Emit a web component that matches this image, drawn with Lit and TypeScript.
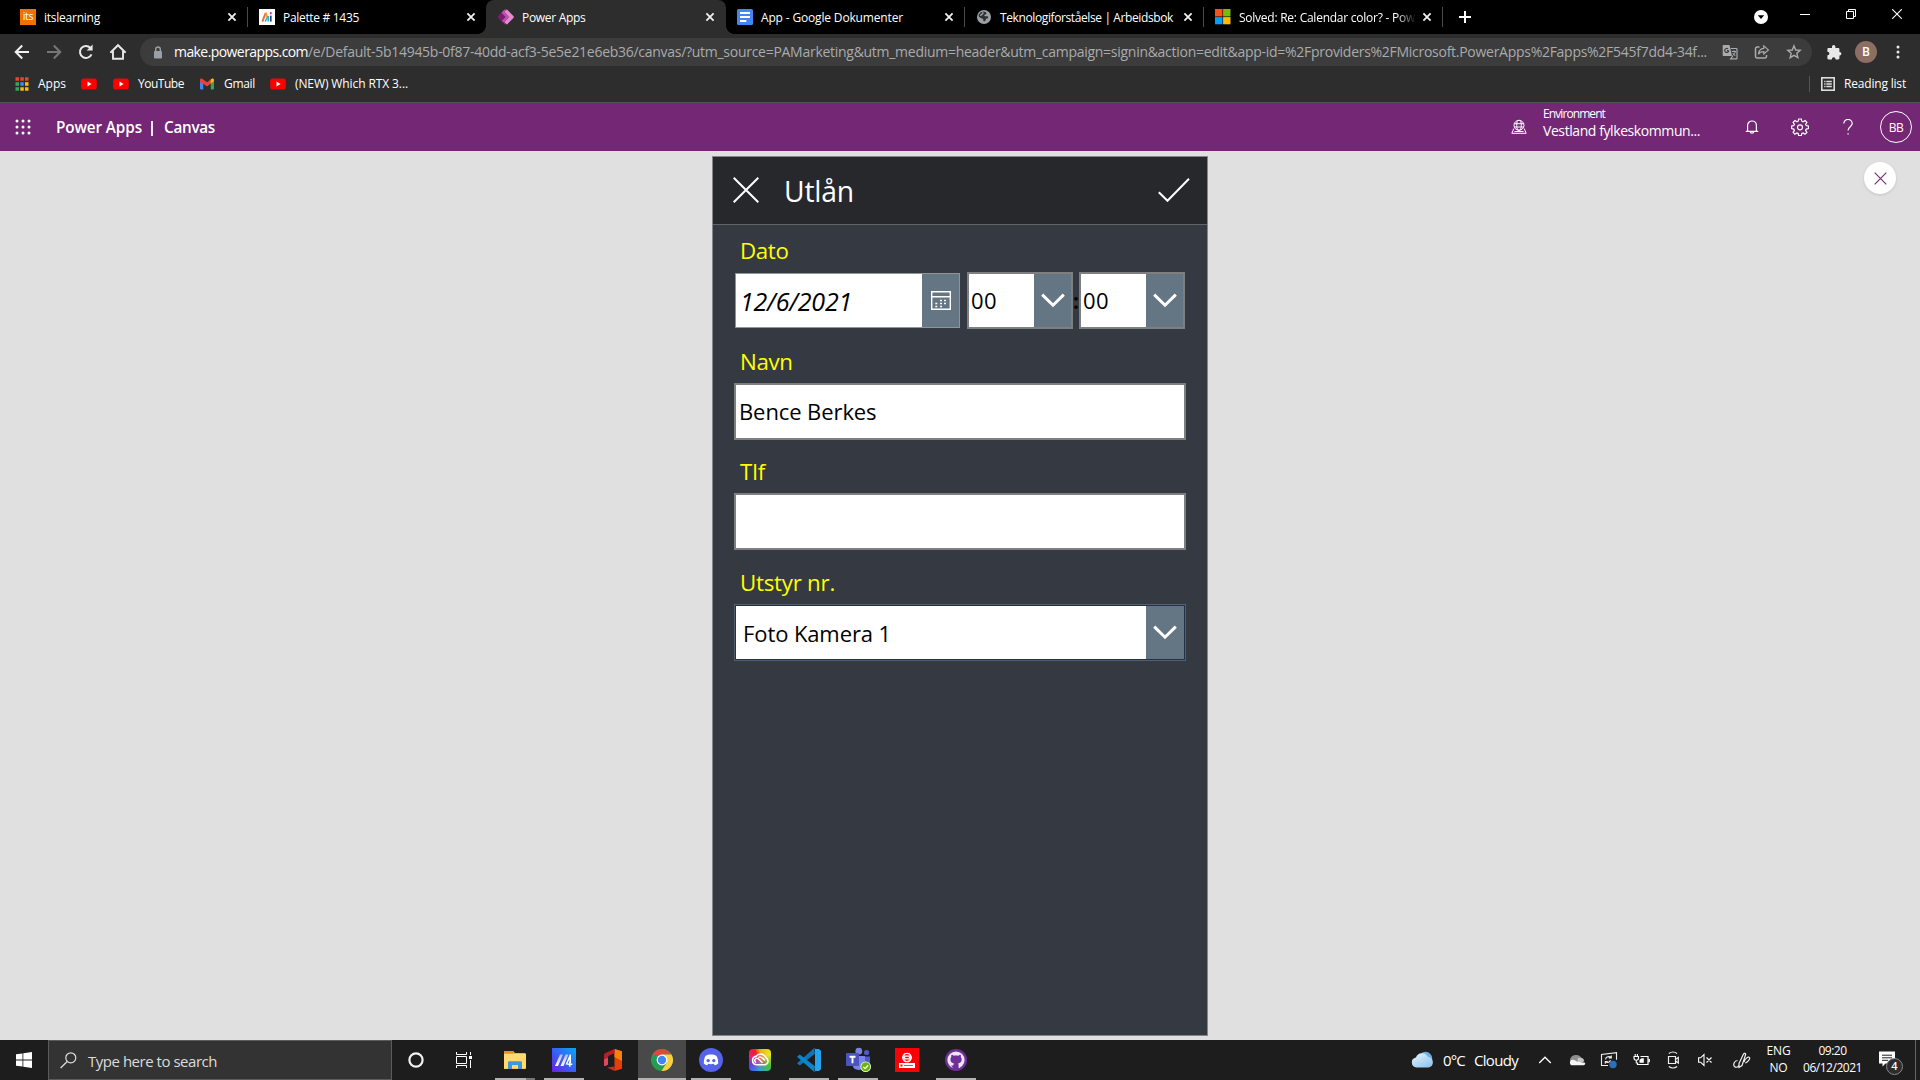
import { LitElement, html, svg, css, TemplateResult } from "lit";
import { customElement, property } from "lit/decorators.js";

type Svg = TemplateResult;

const icon = (w: number, h: number, body: Svg, box = `0 0 ${w} ${h}`) =>
  html`<svg width=${w} height=${h} viewBox=${box} fill="none">${body}</svg>`;

/* A single line of text whose tracking is spread over a given width. */
@customElement("fit-text")
class FitText extends LitElement {
  @property({ type: Number }) w = 0;
  @property() text = "";
  static styles = css`
    :host { display: block; flex: none; white-space: pre; }
  `;
  render() {
    return html`<span>${this.text}</span>`;
  }
  updated() {
    const span = this.renderRoot.querySelector("span")!;
    span.style.letterSpacing = "0";
    const natural = span.getBoundingClientRect().width;
    if (this.w && natural) {
      span.style.letterSpacing = `${(this.w - natural) / this.text.length}px`;
      this.style.width = `${this.w}px`;
    }
  }
}

const t = (text: string, w: number, cls = "") =>
  html`<fit-text class=${cls} .text=${text} .w=${w}></fit-text>`;

/* ---------- icons ---------- */
const tabClose = icon(16, 16, svg`<path d="M4.4 4.4l7.2 7.2M11.6 4.4l-7.2 7.2" stroke="#f1f1f1" stroke-width="1.8"/>`);
const favIts = html`<span class="its">its</span>`;
const favPalette = icon(16, 16, svg`<rect width="16" height="16" fill="#fff"/>
  <path d="M3.4 12.6L6.6 4" stroke="#f0642f" stroke-width="1.8"/><path d="M6.8 3.6L8.4 9" stroke="#f59a23" stroke-width="1.7"/>
  <path d="M6.2 12.6l2-4" stroke="#39b7d8" stroke-width="1.7"/><path d="M9.2 7v5.6" stroke="#2bb5a0" stroke-width="1.5"/>
  <path d="M11.8 6.6v6" stroke="#2a3c9b" stroke-width="1.7"/><path d="M11.8 3.2v2" stroke="#d6218c" stroke-width="1.8"/>`);
const favPower = icon(16, 16, svg`<path d="M6.3.8h3.2l-2 7.2 2 7.2H6.8L.6 9a1.4 1.4 0 010-2z" fill="#9a2b8e"/>
  <path d="M9 .4l6.4 6.7a1.3 1.3 0 010 1.8L9 15.6 6.4 13l4.4-5-4.4-5z" fill="#e58ad0"/>
  <path d="M6.3.8L9 .4l-2.6 2.7 4.4 4.9-4.4 5L3.6 12 7.5 8 3.4 3.8z" fill="#c050ae"/>
  <path d="M3.4 3.8L7.5 8l-3.9 4L.6 9a1.4 1.4 0 010-2z" fill="#7a1c72"/>`);
const favDocs = icon(16, 16, svg`<rect width="16" height="16" rx="1.5" fill="#4285f4"/>
  <path d="M3 4h10M3 8h10M3 12h6.3" stroke="#fff" stroke-width="1.8"/>`);
const favGlobe = icon(16, 16, svg`<circle cx="8" cy="8" r="7" fill="#9aa0a6"/>
  <path d="M7.4 2.4c2 .2 3.4 1.2 3 2.4-.4 1-2 .6-2.2 1.8-.1 1 1.800.6 3 .7 1 .1 1.300.9.7 1.700-.6.8-1.400.3-1.900 1-.4.8-.2 1.500-1.200 2.200-.9.5-1.600-.2-1.500-1.200 0-.9-.4-1.200-1.300-1.600C4.500 8.800 3 8.300 2.500 6.500 3 4.500 5 2.500 7.400 2.400z" fill="#1c1c1c" opacity=".85"/>
  <path d="M6.300 3.500c1.200.2.6 1.100-.2 1.600-.9.500-.8 1.300-2 1.300" stroke="#9aa0a6" stroke-width="1.300"/>`);
const favMs = icon(16, 16, svg`<path d="M0 0h7.500v7.500H0z" fill="#f65314"/><path d="M8.100 0h7.400v7.500H8.100z" fill="#7cbb00"/>
  <path d="M0 8.100h7.500v7.200H0z" fill="#00a1f1"/><path d="M8.100 8.100h7.400v7.200H8.100z" fill="#ffbb00"/>`);
const youtube = icon(16, 12, svg`<rect x=".2" y=".4" width="15.600" height="11.200" rx="2.600" fill="#f00"/><path d="M6.500 3.600L10.600 6 6.500 8.400z" fill="#fff"/>`);
const gmail = icon(16, 12, svg`<path d="M1 11.500V2.800l3.300 2.400v6.300H1.800a.8.8 0 01-.8-.8z" fill="#4285f4"/>
  <path d="M11.700 5.200L15 2.800v7.900a.8.800 0 01-.8.8h-2.500z" fill="#34a853"/>
  <path d="M1 4V2C1 .6 2.500.1 3.500.9L8 4.200 12.500.9v4L8 8.400 4.300 5.700V6z" fill="#ea4335"/>
  <path d="M11.700 5.600V1.500l.8-.6c1-.8 2.500-.3 2.500 1.100v1.200z" fill="#fbbc04"/>`);
const appsGrid = icon(14, 14, svg`
  <path d="M.5.300h3.500v3.500H.5zM5.300.300h3.500v3.500H5.300zM10 .300h3.500v3.500H10z" fill="#ea4335"/>
  <path d="M.5 5.200h3.500v3.600H.5z" fill="#34a853"/><path d="M5.300 5.200h3.500v3.600H5.300z" fill="#4285f4"/><path d="M10 5.200h3.500v3.600H10z" fill="#fbbc04"/>
  <path d="M.5 10.200h3.500v3.500H.5z" fill="#34a853"/><path d="M5.300 10.200h3.500v3.500H5.300zM10 10.200h3.500v3.500H10z" fill="#fbbc04"/>`);
const back = (c: string, flip = false) => icon(16, 16, svg`<path d=${flip ? "M1 8h13M7.800 1.500L14.300 8l-6.500 6.500" : "M15 8H2M8.200 1.500L1.700 8l6.500 6.500"} stroke=${c} stroke-width="2"/>`);
const reload = icon(16, 16, svg`<path d="M13.500 10.300A6 6 0 1112.300 3.800" stroke="#e8e8e8" stroke-width="2"/><path d="M14.600.6v6H8.600z" fill="#e8e8e8"/>`);
const home = icon(18, 18, svg`<path d="M4 8.500v7.300h10V8.500M1.400 9.700L9 2.200l7.600 7.500M4 9v-1h0M14 9V8" stroke="#e8e8e8" stroke-width="1.900"/>`);
const lock = icon(10, 13, svg`<rect x="1" y="5" width="8" height="7.500" rx="1" fill="#9aa0a6"/><path d="M2.700 5.500V3.300a2.300 2.300 0 014.600 0v2.200" stroke="#9aa0a6" stroke-width="1.400"/>`);
const translate = icon(16, 16, svg`<path d="M1.500 1h6l2.500 11H1.500a.8.800 0 01-.8-.8V1.800c0-.4.300-.8.800-.8z" fill="#a9abad"/>
  <path d="M8.700 4.500h5.600c.4 0 .7.300.7.700v9c0 .4-.3.700-.7.700H8.600L10.800 12" stroke="#a9abad" stroke-width="1.200"/>
  <path d="M6.800 6.700H5m1.700.1A2 2 0 116 4.900" stroke="#3c3c3c" stroke-width="1.200"/><path d="M9.800 7.500h4.400M12 6.500v1M10.500 11.500c1.500-.7 2.500-2.200 2.800-4M10.700 9l2.600 3" stroke="#a9abad" stroke-width="1"/>`);
const share = icon(16, 16, svg`<path d="M5.500 3H3a1.500 1.500 0 00-1.500 1.500v8A1.500 1.500 0 003 14h8a1.500 1.500 0 001.500-1.500V11" stroke="#a9abad" stroke-width="1.500"/>
  <path d="M9.800 1.900l4.600 4-4.600 4V7.600c-2.800 0-4.300.8-5.400 2.600.3-3.600 2.300-5.600 5.400-5.900z" stroke="#a9abad" stroke-width="1.200"/>`);
const star = icon(16, 16, svg`<path d="M8 1.900l1.750 4.100 4.450.4-3.370 2.930 1 4.350L8 11.400l-3.830 2.300 1-4.360L1.800 6.400l4.450-.4z" stroke="#a9abad" stroke-width="1.400"/>`);
const puzzle = icon(16, 16, svg`<path d="M6 2.700a1.700 1.700 0 013.400 0V4h2.800c.7 0 1.200.5 1.200 1.200V8h.300a1.700 1.700 0 010 3.400h-.3v2.800c0 .7-.5 1.200-1.200 1.200H9.500V15a1.800 1.800 0 00-3.600 0v.4H2.600c-.7 0-1.200-.5-1.200-1.200v-3h.3a1.700 1.700 0 000-3.400h-.3V5.200C1.400 4.500 1.900 4 2.600 4H6z" fill="#e8e8e8"/>`);
const dots = icon(4, 14, svg`<circle cx="2" cy="2" r="1.500" fill="#e8e8e8"/><circle cx="2" cy="7" r="1.500" fill="#e8e8e8"/><circle cx="2" cy="12" r="1.500" fill="#e8e8e8"/>`);
const reading = icon(14, 14, svg`<rect x=".8" y=".8" width="12.400" height="12.400" stroke="#ddd" stroke-width="1.600"/>
  <path d="M3.200 4.500h1.300M3.200 7h1.300M3.200 9.500h1.300M5.300 4.500h5.500M5.300 7h5.500M5.300 9.500h5.500" stroke="#ddd" stroke-width="1.500"/>`);
const plus = icon(12, 12, svg`<path d="M6 0v12M0 6h12" stroke="#fff" stroke-width="2"/>`);
const tabSearch = icon(14, 14, svg`<circle cx="7" cy="7" r="7" fill="#fff"/><path d="M3.800 5.200h6.400L7 9z" fill="#000"/>`);
const winMin = icon(10, 10, svg`<path d="M0 5.500h10" stroke="#fff"/>`);
const winRestore = icon(10, 10, svg`<path d="M.5 2.500h7v7h-7zM2.500 2.500v-2h7v7h-2" stroke="#fff"/>`);
const winClose = icon(10, 10, svg`<path d="M.2.200l9.600 9.600M9.800.200L.2 9.800" stroke="#fff" stroke-width="1.100"/>`);

const waffle = icon(16, 16, svg`${[2, 8, 14].map(y => [2, 8, 14].map(x => svg`<circle cx=${x} cy=${y} r="1.500" fill="#fff"/>`))}`);
const envIcon = icon(16, 16, svg`<circle cx="8" cy="6.300" r="5" stroke="#fff"/><ellipse cx="8" cy="6.300" rx="2.300" ry="5" stroke="#fff"/>
  <path d="M3.300 4.700h9.400M3.300 8h9.400M2.800 9.500L.8 14.300h14.400l-2-4.800M3.400 12.500h9.200" stroke="#fff"/>`);
const bell = icon(14, 16, svg`<path d="M2.600 12V6.400a4.400 4.400 0 018.800 0V12M.8 12.300h12.400M5.300 12.500a1.700 1.700 0 003.400 0" stroke="#fff" stroke-width="1.200"/>`);
const gear = icon(18, 18, svg`<path d="M7.700 1h2.600l.5 2.200 1.300.6 2-1.300 1.800 1.900-1.300 1.900.6 1.300 2.300.5v2.500l-2.300.5-.6 1.300 1.300 2-1.900 1.800-1.900-1.300-1.300.6-.5 2.200H7.700l-.5-2.200-1.300-.6-2 1.300-1.800-1.900 1.300-1.900-.6-1.300L.6 10.600V8.100l2.200-.5.600-1.300-1.300-2L4 2.500l1.900 1.300 1.300-.6z" stroke="#fff" stroke-width="1.200"/><circle cx="9" cy="9.300" r="2.500" stroke="#fff" stroke-width="1.200"/>`);
const help = icon(10, 16, svg`<path d="M.8 4.600a4.200 4.200 0 118.400 0c0 3.100-4.200 3.300-4.200 7" stroke="#fff" stroke-width="1.200"/><path d="M4.400 14.200h1.300v1.400H4.400z" fill="#fff"/>`);
const cross = (n: number, c: string, sw: number) => icon(n, n, svg`<path d=${`M.7.700L${n - 0.7} ${n - 0.7}M${n - 0.7}.700L.7 ${n - 0.7}`} stroke=${c} stroke-width=${sw}/>`);
const check = icon(32, 24, svg`<path d="M.8 14.200l8.700 8.600L31 .8" stroke="#fff" stroke-width="2"/>`);
const calendar = icon(20, 19, svg`<path d="M.7.700h18.600v17.600H.7zM.7 5.800h18.600" stroke="#fff" stroke-width="1.400"/>
  <path d="M9 9.500h2M13 9.500h2M4.300 12.500h2M9 12.500h2M13 12.500h2M4.300 15.500h2M9 15.500h2" stroke="#fff" stroke-width="1.700"/>`);
const chevron = icon(24, 15, svg`<path d="M1.200 1.600L12 12.200 22.800 1.600" stroke="#fff" stroke-width="3"/>`);

const winLogo = icon(16, 16, svg`<path d="M0 2.300l6.500-.9v6.200H0zM7.300 1.300L16 0v7.600H7.300zM0 8.400h6.500v6.200L0 13.700zM7.300 8.400H16V16l-8.700-1.300z" fill="#fff"/>`);
const magnifier = icon(17, 17, svg`<circle cx="10.800" cy="5.800" r="5" stroke="#ddd" stroke-width="1.200"/><path d="M7.200 9.500L.6 16" stroke="#ddd" stroke-width="1.300"/>`);
const cortana = icon(16, 16, svg`<circle cx="8" cy="8" r="6.600" stroke="#f2f2f2" stroke-width="2.200"/>`);
const taskView = icon(16, 16, svg`<path d="M.5 0v2.500h10V0M.5 16v-2.500h10V16M.5 4.500h10v7H.5zM14.500 0v3M14.500 8v8" stroke="#fff"/><path d="M13 4h3v3h-3z" fill="#fff"/>`);
const explorer = icon(24, 24, svg`<path d="M1 3h9l2 2h10.500v16H1z" fill="#f0b93a"/><path d="M1 3h9.500v2.500H1z" fill="#d99a1a"/><path d="M1 6h22v14.500H1z" fill="#ffda70"/>
  <path d="M5 21v-6.300c0-1 .6-1.500 1.500-1.500h11c1 0 1.500.5 1.500 1.500V21h-4v-4H9v4z" fill="#3f97d9"/>`);
const maIcon = icon(24, 24, svg`<defs><linearGradient id="ma" x1="0" y1="1" x2="1" y2="0"><stop offset="0" stop-color="#6a1fe8"/><stop offset=".5" stop-color="#3563f2"/><stop offset="1" stop-color="#08a9f5"/></linearGradient>
  <linearGradient id="mb" x1="0" y1="1" x2="0" y2="0"><stop offset="0" stop-color="#fff"/><stop offset="1" stop-color="#b9b4fa"/></linearGradient></defs>
  <rect width="24" height="24" fill="url(#ma)"/><path d="M3 18L8 6.500h3L6 18zM8.500 18l5-11.500h3L11.500 18z" fill="url(#mb)"/>
  <path d="M13.500 16.500l4.300-10H19v8.500h-1.600v-3.800L15.200 16.500z" fill="#fff"/><path d="M17.800 13.800v5M15.300 16.300h5" stroke="#fff" stroke-width="1.500"/>`);
const office = icon(24, 24, svg`<path d="M13.500 1L21 3.200V20.700L13.500 23z" fill="#df4206"/><path d="M13.500 1L21 3.200V13l-7.500-4z" fill="#f6820d"/>
  <path d="M3 7.200c0-1 .5-1.700 1.400-2.200L13.500 1v4.300L8.200 7.500c-.8.4-1.200.9-1.200 1.800v7.200L4.500 18c-.9.300-1.500 0-1.500-1z" fill="#b3202a"/>
  <path d="M3 11.500L7 9.800v6.700L4.500 18c-.9.300-1.500 0-1.500-1z" fill="#dd4a60"/><path d="M6 19.500l7.500-1V23z" fill="#d3262c"/>`);
const chrome = icon(24, 24, svg`<circle cx="12" cy="12" r="11" fill="#249c52"/><path d="M12 1a11 11 0 019.500 5.500H12L8 9 2.500 6.500A11 11 0 0112 1z" fill="#e0483c"/>
  <path d="M2.500 6.500L7.200 14.800 10 8z" fill="#249c52"/><path d="M12 6.500h9.500A11 11 0 0111.500 23l5.200-8.300z" fill="#fccf43"/>
  <circle cx="12" cy="12" r="5.400" fill="#fff"/><circle cx="12" cy="12" r="4.200" fill="#4285f4"/>`);
const discord = icon(24, 24, svg`<circle cx="12" cy="12" r="12" fill="#5562ea"/><path d="M8.800 6.800c2-.5 4.400-.5 6.400 0 1.500.4 2.600 1.300 3.100 2.600.7 2 1 4.200.9 6.200-1.100 1-2.300 1.500-3.500 1.700l-.9-1.500c-1.900.5-3.700.5-5.600 0l-.9 1.500c-1.200-.2-2.400-.7-3.500-1.700-.1-2 .2-4.200.9-6.200.5-1.300 1.600-2.200 3.100-2.600z" fill="#fff"/><circle cx="9.200" cy="12.600" r="1.700" fill="#5562ea"/><circle cx="14.800" cy="12.600" r="1.700" fill="#5562ea"/>`);
const creative = html`<span class="cc">${icon(22, 22, svg`<path d="M7.500 15.800a4.300 4.300 0 01-.4-8.500A5.700 5.700 0 0117 8.800a3.800 3.800 0 01-1 7z" stroke="#fff" stroke-width="1.600"/><path d="M13.500 13.800L9.800 10.300a2.200 2.200 0 10-2.600 3.300M9.500 8.500c1.600-1.500 3-.3 4.500 1.100l2 1.900" stroke="#fff" stroke-width="1.500"/>`)}</span>`;
const vscode = icon(24, 24, svg`<path d="M18 5.800L2.800 17.600 0 15.200 17 .2z" fill="#0f75b8"/><path d="M18 18.200L2.800 6.400 0 8.800l17 15z" fill="#0b86cb"/><path d="M17 .2L24 3v18l-7 2.800 1-1.500V1.700z" fill="#27a3ee"/><path d="M18 1h4l2 2v18l-2 2h-4z" fill="#27a3ee"/>`);
const teams = icon(26, 26, svg`<circle cx="13.800" cy="4.200" r="3.400" fill="#7b83eb"/><circle cx="21.600" cy="5.500" r="2.600" fill="#5059c9"/><path d="M18 9.500h7v7.500a4 4 0 01-7 2.500z" fill="#5059c9"/><path d="M8 9h12v8a6.500 6.500 0 01-12 3z" fill="#7b83eb"/>
  <rect x="1" y="6" width="13" height="13" rx="1" fill="#4b53bc"/><path d="M4.500 9.800h6M7.500 9.800v6.500" stroke="#fff" stroke-width="1.900"/>
  <circle cx="20.700" cy="19.800" r="5.300" fill="#fff"/><circle cx="20.700" cy="19.800" r="4.500" fill="#6bb700"/><path d="M18.400 19.900l1.700 1.700 3-3.300" stroke="#fff" stroke-width="1.300"/>`);
const redApp = icon(24, 24, svg`<rect width="24" height="24" fill="#fb0007"/><path d="M8 8.200a4.200 4.200 0 018 0zM8 10.800a4.200 4.200 0 008 0z" stroke="#fff" stroke-width="1.300"/><path d="M7 9.500h3.200M13.800 9.500H17" stroke="#fff" stroke-width="2"/>
  <rect x="4" y="15" width="16" height="5" fill="#fff"/><rect x="5.500" y="16.500" width="2" height="2" fill="#fb0007"/><path d="M9 17.500h9" stroke="#777" stroke-width="1"/>`);
const github = icon(24, 24, svg`<circle cx="12" cy="12" r="11" fill="#6e2f98"/><circle cx="12" cy="12" r="8.600" fill="#efe6f4"/>
  <path d="M9.400 21v-3.500c-1.500.3-2.300-.4-2.800-1.300M14.600 21v-3.900c0-.8-.2-1.200-.5-1.600 2-.3 3.600-1.200 3.600-4.200 0-1-.4-1.800-.9-2.400.1-.5.200-1.300-.2-2.200-.8 0-1.700.5-2.300 1-1.500-.4-3-.4-4.500 0-.6-.5-1.500-1-2.300-1-.4.900-.3 1.700-.2 2.200-.6.600-.9 1.400-.9 2.400 0 3 1.600 3.900 3.600 4.200-.4.400-.5.800-.6 1.500v4.300z" fill="#6e2f98"/>`);

const weather = icon(24, 18, svg`<defs><linearGradient id="cl" x1="0" y1="0" x2=".8" y2="1"><stop offset="0" stop-color="#e8f6ff"/><stop offset="1" stop-color="#8fc4ee"/></linearGradient></defs>
  <circle cx="15.500" cy="7.500" r="6.700" fill="#6eaee2"/><path d="M6.500 16.500a5 5 0 01-.6-9.900A6.500 6.500 0 0118 6a5.300 5.300 0 01.5 10.500z" fill="url(#cl)"/>`);
const trayUp = icon(14, 8, svg`<path d="M1.200 7L7 1.200 12.800 7" stroke="#fff" stroke-width="1.300"/>`);
const onedrive = icon(18, 12, svg`<path d="M2 7.500A5.500 5.500 0 018 1c2.500-.2 4 .8 5 2.500a4 4 0 013 3L9 9z" fill="#8f8f8f"/><path d="M9.500 4.500c1.500-1.500 5-1 6 1l.8 2L10 9z" fill="#c4c4c4"/>
  <path d="M3.300 11.200a3 3 0 01.2-5.200c2-.8 3.500.2 5.500 1.600l8 1.200a1.700 1.700 0 01-1.500 2.400z" fill="#f5f5f5"/>`);
const sync = icon(18, 18, svg`<path d="M8 14.500H1.500V3.500l15-1.800v7" stroke="#eee" stroke-width="1.100"/><path d="M5.500 8.300a3.300 3.300 0 015.500-1.800M11.300 4.500v2.400H8.800M10.500 9.200a3.300 3.300 0 01-4.700 1.800M5.300 12.800v-2.300h2.400" stroke="#eee" stroke-width="1.100"/><circle cx="13" cy="13.500" r="3.700" fill="#2c70bd"/>`);
const battery = icon(17, 14, svg`<path d="M7.500 3.500H15v8H4.500V9.500M16.300 6v3.200" stroke="#fff" stroke-width="1.200"/><path d="M8.500 5.300h2.300v4.400H6.500V7z" fill="#fff"/><path d="M1 3.500h4.500V5A2.200 2.200 0 011 5zM2.200 3V1M4.400 3V1M3.300 7.500v3" stroke="#fff" stroke-width="1.100"/>`);
const meet = icon(14, 18, svg`<path d="M2.500 5.500h7v7h-7zM9.500 8.500l2.800-2v5.500l-2.800-2M2.800 2.500c2.500-1.800 5.800-1.800 8.300 0M2.800 15.500c2.500 1.800 5.800 1.800 8.300 0" stroke="#eee" stroke-width="1.200"/>`);
const mute = icon(16, 14, svg`<path d="M1.600 4.800h2L7 1.600v10.800L3.600 9.200h-2zM9.500 4.500l5 5M14.500 4.500l-5 5" stroke="#fff" stroke-width="1.100"/>`);
const pen = icon(18, 18, svg`<path d="M4.500 9.500C1 9.500 0 14 1.500 15.500S6 16 6 13.800M6 12.500L10.500 3c.7-1.300 2.500-.6 2 1L9 14.500 6 16.500zM11 11c1-3.500 4.500-6 5.500-4.500s-2.300 5-4.300 5.500" stroke="#eee" stroke-width="1.200"/>`);
const action = icon(16, 16, svg`<path d="M0 .500h16v12H6.500L3.500 15.500v-3H0z" fill="#fff"/><path d="M3 4.200h10M3 6.800h10M3 9.300h6" stroke="#1d1d1d"/>`);

/* ---------- browser chrome ---------- */
@customElement("browser-tabs")
class BrowserTabs extends LitElement {
  static styles = css`
    :host { display: flex; height: 34px; background: #000; color: #fff; font-size: 12px; padding-left: 8px; }
    svg { display: block; flex: none; }
    .tab { width: 239px; height: 34px; box-sizing: border-box; display: flex; align-items: center; padding: 0 7px 0 12px; position: relative; }
    .tab > fit-text { margin-left: 8px; line-height: 33px; }
    .close { margin-left: auto; }
    .sep::after { content: ""; position: absolute; right: -1px; top: 7px; width: 1px; height: 20px; background: #4a4a4a; }
    .active { background: #2d2d2d; border-radius: 8px 8px 0 0; width: 240px; margin-right: -1px; padding-right: 8px; z-index: 1; }
    .active::before, .active::after { content: ""; position: absolute; bottom: 0; width: 8px; height: 8px; }
    .active::before { left: -8px; background: radial-gradient(circle at 0 0, transparent 7.500px, #2d2d2d 8px); }
    .active::after { right: -8px; background: radial-gradient(circle at 100% 0, transparent 7.500px, #2d2d2d 8px); }
    .fade { -webkit-mask-image: linear-gradient(90deg, #000 158px, transparent 177px); }
    .its { width: 16px; height: 16px; background: #f07000; font: 10.500px/15px "Open Sans", sans-serif; letter-spacing: -.3px; text-align: center; }
    .new { margin: 11px 0 0 17px; }
    .win { margin-left: auto; display: flex; align-items: center; height: 28px; }
    .win svg { margin-right: 36px; }
    .win .first svg { margin: 6px 46px 0 0; margin-right: 32px; }
    .win .first { margin-right: 0; padding-right: 0; }
    .win svg:last-child { margin-right: 18px; }
    .win .first svg:last-child { margin-right: 32px; }
  `;
  tabs = [
    { icon: favIts, text: "itslearning", w: 56, sep: true },
    { icon: favPalette, text: "Palette # 1435", w: 76 },
    { icon: favPower, text: "Power Apps", w: 63.5, active: true },
    { icon: favDocs, text: "App - Google Dokumenter", w: 142, sep: true },
    { icon: favGlobe, text: "Teknologiforståelse | Arbeidsbok", w: 173, sep: true },
    { icon: favMs, text: "Solved: Re: Calendar color? - Pow", w: 176, sep: true, fade: true },
  ];
  render() {
    return html`${this.tabs.map(x => html`
      <div class="tab ${x.active ? "active" : ""} ${x.sep ? "sep" : ""}">
        ${x.icon}${t(x.text, x.w, x.fade ? "fade" : "")}<span class="close">${tabClose}</span>
      </div>`)}
      <div class="new">${plus}</div>
      <div class="win"><span class="first">${tabSearch}</span>${winMin}${winRestore}${winClose}</div>`;
  }
}

@customElement("browser-toolbar")
class BrowserToolbar extends LitElement {
  static styles = css`
    :host { display: block; background: #2d2d2d; border-bottom: 1px solid #50544f; height: 68px; color: #fff; }
    svg { display: block; flex: none; }
    .nav { display: flex; align-items: center; height: 36px; padding-right: 20px; }
    .btn { width: 32px; display: flex; justify-content: center; }
    .nav .btn:first-child { margin-left: 6px; }
    .omni { margin-left: 6px; width: 1672px; height: 28px; border-radius: 14px; background: #3c3c3c; display: flex; align-items: center;
      box-sizing: border-box; padding: 0 10px 0 13px; font-size: 14px; line-height: 26px; }
    .omni .host { margin-left: 11px; }
    .path { color: #a9abad; }
    .acts { display: flex; margin-left: auto; gap: 16px; }
    .ext { margin-left: 14px; }
    .avatar { width: 22px; height: 22px; border-radius: 50%; background: #8d6e63; font: 500 12px/22px Roboto, sans-serif; text-align: center; margin: 0 19px 0 13px; }
    .marks { display: flex; align-items: center; height: 28px; padding: 0 14px 0 15px; font-size: 12px; line-height: 26px; }
    .marks svg + fit-text { margin-left: 9px; }
    .m1 { margin-left: 15px; } .m2 { margin-left: 16px; } .m3 { margin-left: 15px; } .m4 { margin-left: 15px; }
    .m { display: flex; align-items: center; }
    .rl { margin-left: auto; }
    .vsep { width: 1px; height: 16px; background: #555; margin-right: 11px; }
  `;
  render() {
    return html`
      <div class="nav">
        <span class="btn">${back("#f0f0f0")}</span><span class="btn">${back("#777", true)}</span>
        <span class="btn">${reload}</span><span class="btn">${home}</span>
        <div class="omni">${lock}${t("make.powerapps.com", 134, "host")}
          ${t("/e/Default-5b14945b-0f87-40dd-acf3-5e5e21e6eb36/canvas/?utm_source=PAMarketing&utm_medium=header&utm_campaign=signin&action=edit&app-id=%2Fproviders%2FMicrosoft.PowerApps%2Fapps%2F545f7dd4-34f...", 1399, "path")}
          <span class="acts">${translate}${share}${star}</span>
        </div>
        <span class="ext">${puzzle}</span><span class="avatar">B</span>${dots}
      </div>
      <div class="marks">
        <span class="m">${appsGrid}${t("Apps", 28)}</span>
        <span class="m m1">${youtube}</span>
        <span class="m m2">${youtube}${t("YouTube", 46)}</span>
        <span class="m m3">${gmail}${t("Gmail", 31)}</span>
        <span class="m m4">${youtube}${t("(NEW) Which RTX 3...", 113)}</span>
        <span class="m rl"><span class="vsep"></span>${reading}${t("Reading list", 62)}</span>
      </div>`;
  }
}

@customElement("suite-header")
class SuiteHeader extends LitElement {
  static styles = css`
    :host { display: flex; align-items: center; height: 48px; background: #742774; color: #fff; padding-left: 15px; }
    svg { display: block; flex: none; }
    .brand { display: flex; align-items: center; margin-left: 25px; font-size: 15.300px; font-weight: 600; line-height: 50px; }
    .bar { margin: 3px 11px 0 9px; width: 2px; height: 15px; background: #f3e9f3; }
    .env { margin-left: auto; display: flex; align-items: center; }
    .txt { margin: 0 24px 9px 16px; width: 161px; }
    .s { font-size: 12px; line-height: 16px; } .l { font-size: 14px; line-height: 17px; }
    .cell { width: 48px; display: flex; justify-content: center; }
    .cell.last { width: 47px; }
    .me { width: 30px; height: 30px; border: 1px solid #fff; border-radius: 50%; font-size: 12px; line-height: 32px; margin: 0 8px 0 9px; display: flex; justify-content: center; }
  `;
  render() {
    return html`${waffle}
      <div class="brand">${t("Power Apps", 86)}<span class="bar"></span>${t("Canvas", 51)}</div>
      <div class="env">${envIcon}<div class="txt">${t("Environment", 62, "s")}${t("Vestland fylkeskommun...", 157, "l")}</div></div>
      <span class="cell">${bell}</span><span class="cell">${gear}</span><span class="cell last">${help}</span><span class="me">${t("BB", 14.5)}</span>`;
  }
}

/* ---------- loan form ---------- */
@customElement("loan-form")
class LoanForm extends LitElement {
  static styles = css`
    :host { display: block; width: 496px; height: 880px; box-sizing: border-box; border: 1px solid #84878b; background: #353941; }
    svg { display: block; flex: none; }
    .head { display: flex; align-items: center; height: 67px; background: #27282c; border-bottom: 1px solid #626467; padding: 0 17px 0 20px; color: #fff; }
    .head fit-text { margin-left: 25px; font-size: 28.300px; line-height: 66px; }
    .head svg { margin-bottom: 1px; }
    .check { margin-left: auto; }
    .body { padding: 11px 21px 0; }
    .label { color: #ff0; font-size: 22.300px; line-height: 30px; height: 36px; margin-left: 6px; }
    .field { height: 57px; margin-bottom: 17.700px; display: flex; font-size: 22px; color: #000; box-sizing: border-box; }
    .box { background: #fff; border: 2px solid #7d7f80; box-sizing: border-box; height: 57px; flex: 1; display: flex; align-items: center; padding-left: 3px; line-height: 53px; }
    .date { flex: none; width: 225px; height: 55px; margin: 1px 7px 0 1px; border: 1px solid #8e9599; font-size: 25px; font-style: italic; line-height: 50px; padding-left: 4px; }
    .time { flex: none; width: 106px; padding-left: 2px; line-height: 51px; }
    .btn { margin-left: auto; align-self: stretch; width: 38px; background: #647583; display: flex; align-items: center; justify-content: center; }
    .time .btn { width: 37px; }
    .date .btn { width: 37px; }
    .colon { width: 6px; text-align: center; font-weight: 700; line-height: 58px; font-size: 21px; display: flex; justify-content: center; }
    .select { border: 1px solid #56606c; outline: 1px solid #22314a; outline-offset: -2px; padding-left: 8px; line-height: 52px; }
    .select .btn { margin: 1px 1px 1px auto; width: 38px; }
  `;
  render() {
    return html`
      <div class="head">${cross(26, "#fff", 2)}${t("Utlån", 70)}<span class="check">${check}</span></div>
      <div class="body">
        <div class="label">${t("Dato", 48.5)}</div>
        <div class="field">
          <div class="box date">${t("12/6/2021", 112)}<span class="btn">${calendar}</span></div>
          <div class="box time">${t("00", 26)}<span class="btn">${chevron}</span></div>
          <span class="colon">:</span>
          <div class="box time">${t("00", 26)}<span class="btn">${chevron}</span></div>
        </div>
        <div class="label">${t("Navn", 52.5)}</div>
        <div class="field"><div class="box">${t("Bence Berkes", 137.5)}</div></div>
        <div class="label">${t("Tlf", 25)}</div>
        <div class="field"><div class="box"></div></div>
        <div class="label">${t("Utstyr nr.", 95)}</div>
        <div class="field"><div class="box select">${t("Foto Kamera 1", 148)}<span class="btn">${chevron}</span></div></div>
      </div>`;
  }
}

/* ---------- taskbar ---------- */
@customElement("task-bar")
class TaskBar extends LitElement {
  static styles = css`
    :host { display: flex; align-items: center; height: 40px; background: #1d1d1d; color: #fff; }
    svg { display: block; flex: none; }
    .start { width: 48px; display: flex; justify-content: center; }
    .search { width: 344px; height: 40px; box-sizing: border-box; border: 1px solid #5c5c5c; background: #333; display: flex; align-items: center; padding-left: 11px; color: #dcdcdc; font-size: 15px; line-height: 38px; }
    .search fit-text { margin: 1px 0 0 11px; }
    .sys { width: 48px; display: flex; justify-content: center; }
    .apps { display: flex; height: 40px; margin-left: 2px; }
    .app { width: 49px; display: flex; align-items: center; justify-content: center; position: relative; }
    .run::after { content: ""; position: absolute; left: 4.500px; width: 40px; height: 2px; bottom: 0; background: #b3b3b3; }
    .split::after { background: linear-gradient(90deg, #b3b3b3 31px, #777 31px); }
    .on::before { content: ""; position: absolute; inset: 0 .500px; background: #494949; border-bottom: 2px solid #b3b3b3; height: 38px; }
    .on svg { position: relative; }
    .cc { display: block; width: 22px; height: 22px; border-radius: 4px; background: radial-gradient(circle, #f0507acc 0, transparent 60%), conic-gradient(from 0deg, #f9b000, #e8e81c 60deg, #4bc12f 120deg, #2aa8d8 180deg, #5a42f0 240deg, #e8207a 290deg, #f01c1c 330deg, #f9b000); }
    .tray { margin-left: auto; display: flex; align-items: center; height: 40px; }
    .wx { display: flex; align-items: center; font-size: 15px; line-height: 41px; margin-right: 11px; }
    .wx fit-text { margin-left: 9px; }
    .cell { width: 32px; display: flex; justify-content: center; }
    .pen { width: 41px; }
    .col { text-align: center; display: flex; flex-direction: column; align-items: center; font-size: 12px; line-height: 17.500px; margin-bottom: 2px; }
    .lang { width: 33px; } .clock { width: 75px; }
    .note { width: 45px; display: flex; padding-left: 9px; position: relative; box-sizing: border-box; margin-bottom: 2px; }
    .badge { position: absolute; left: 16px; top: 7px; width: 15px; height: 15px; border: 1px solid #888; border-radius: 50%; background: #2d2d2d; font-size: 11px; font-weight: 600; line-height: 14px; text-align: center; }
    .peek { width: 1px; height: 40px; background: #666; margin-right: 4px; }
  `;
  apps: [any, string][] = [
    [explorer, "run split"], [maIcon, "run"], [office, ""], [chrome, "on"], [discord, "run"],
    [creative, ""], [vscode, "run"], [teams, "run"], [redApp, ""], [github, "run"],
  ];
  render() {
    return html`
      <span class="start">${winLogo}</span>
      <div class="search">${magnifier}${t("Type here to search", 129)}</div>
      <span class="sys">${cortana}</span><span class="sys">${taskView}</span>
      <div class="apps">${this.apps.map(([i, c]) => html`<span class="app ${c}">${i}</span>`)}</div>
      <div class="tray">
        <div class="wx">${weather}${t("0°C", 22)}${t("Cloudy", 44)}</div>
        ${[trayUp, onedrive, sync, battery, meet, mute].map(i => html`<span class="cell">${i}</span>`)}
        <span class="cell pen">${pen}</span>
        <div class="col lang">${t("ENG", 24)}${t("NO", 18)}</div>
        <div class="col clock">${t("09:20", 28)}${t("06/12/2021", 59)}</div>
        <div class="note">${action}<span class="badge">4</span></div>
        <span class="peek"></span>
      </div>`;
  }
}

@customElement("app-root")
class AppRoot extends LitElement {
  static styles = css`
    :host { display: flex; flex-direction: column; width: 1920px; height: 1080px; overflow: hidden; font-family: "Open Sans", "Noto Sans", sans-serif; background: #e0e0e0; }
    .stage { flex: 1; display: flex; justify-content: center; padding-top: 5px; box-sizing: border-box; position: relative; }
    .exit { position: absolute; left: 1864px; top: 11px; width: 32px; height: 32px; border-radius: 50%; background: #fff; display: flex; align-items: center; justify-content: center; box-shadow: 0 1px 3px #0002; }
  `;
  render() {
    return html`
      <browser-tabs></browser-tabs>
      <browser-toolbar></browser-toolbar>
      <suite-header></suite-header>
      <div class="stage"><loan-form></loan-form><span class="exit">${cross(13, "#742774", 1.1)}</span></div>
      <task-bar></task-bar>`;
  }
}
